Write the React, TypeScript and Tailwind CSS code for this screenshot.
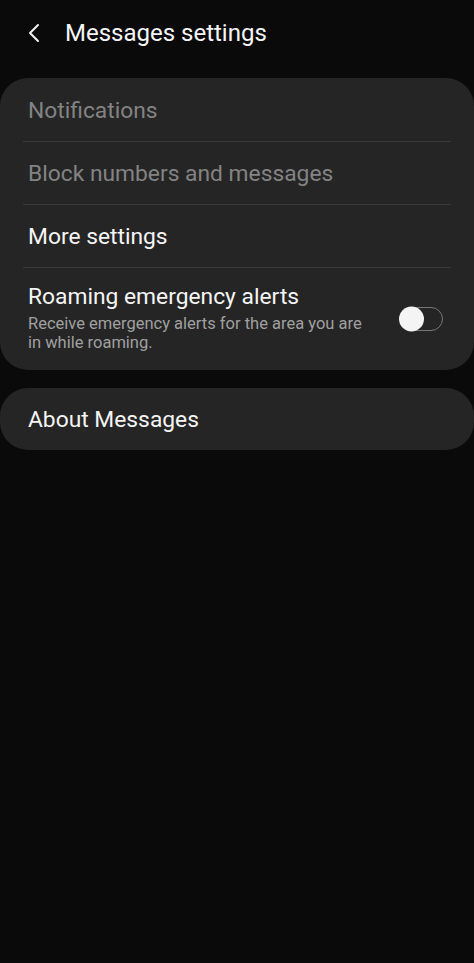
import { useState } from "react";

const rowText = "text-[22.8px] leading-none";

const Divider = () => <div className="mx-[23px] h-px bg-[#3a3a3a]" />;

const Toggle = ({ on, onChange }: { on: boolean; onChange: () => void }) => (
  <button
    onClick={onChange}
    className="relative h-[24px] w-[43px] shrink-0 rounded-full border-[1.5px] border-[#777]"
  >
    <span
      className={`absolute top-1/2 h-[25px] w-[25px] -translate-y-1/2 rounded-full bg-[#f4f4f4] ${
        on ? "left-[17px]" : "left-[-2px]"
      }`}
    />
  </button>
);

const App = () => {
  const [roaming, setRoaming] = useState(false);

  return (
    <div
      className="min-h-[963px] w-full bg-[#0a0a0a] text-[#f5f5f5]"
      style={{ fontFamily: "Roboto, 'Noto Sans', sans-serif" }}
    >
      <header className="flex h-[66px] items-center">
        <button className="ml-[24px] flex h-[20px] w-[20px] items-center justify-center">
          <svg width="14" height="20" viewBox="0 0 14 20" fill="none">
            <path
              d="M11 2 L3 10 L11 18"
              stroke="#f2f2f2"
              strokeWidth="2"
              strokeLinecap="round"
              strokeLinejoin="round"
            />
          </svg>
        </button>
        <h1 className="ml-[21px] text-[24px] leading-none">Messages settings</h1>
      </header>

      <div className="mt-[12px] overflow-hidden rounded-[28px] bg-[#252525]">
        <div className="flex h-[63px] items-center px-[28px] pt-[3px]">
          <span className={`${rowText} text-[#838383]`}>Notifications</span>
        </div>
        <Divider />
        <div className="flex h-[62px] items-center px-[28px] pt-[2px]">
          <span className={`${rowText} text-[#838383]`}>
            Block numbers and messages
          </span>
        </div>
        <Divider />
        <div className="flex h-[62px] items-center px-[28px] pt-[2px]">
          <span className={rowText}>More settings</span>
        </div>
        <Divider />
        <div className="flex h-[102px] items-center justify-between pl-[28px] pr-[31px]">
          <div className="flex flex-col">
            <span className={rowText}>Roaming emergency alerts</span>
            <span className="mt-[5px] w-[345px] text-[16.5px] leading-[19px] text-[#a0a0a0]">
              Receive emergency alerts for the area you are in while roaming.
            </span>
          </div>
          <Toggle on={roaming} onChange={() => setRoaming(!roaming)} />
        </div>
      </div>

      <div className="mt-[18px] flex h-[62px] items-center rounded-[28px] bg-[#252525] px-[28px] pt-[3px]">
        <span className={rowText}>About Messages</span>
      </div>
    </div>
  );
};

export default App;
